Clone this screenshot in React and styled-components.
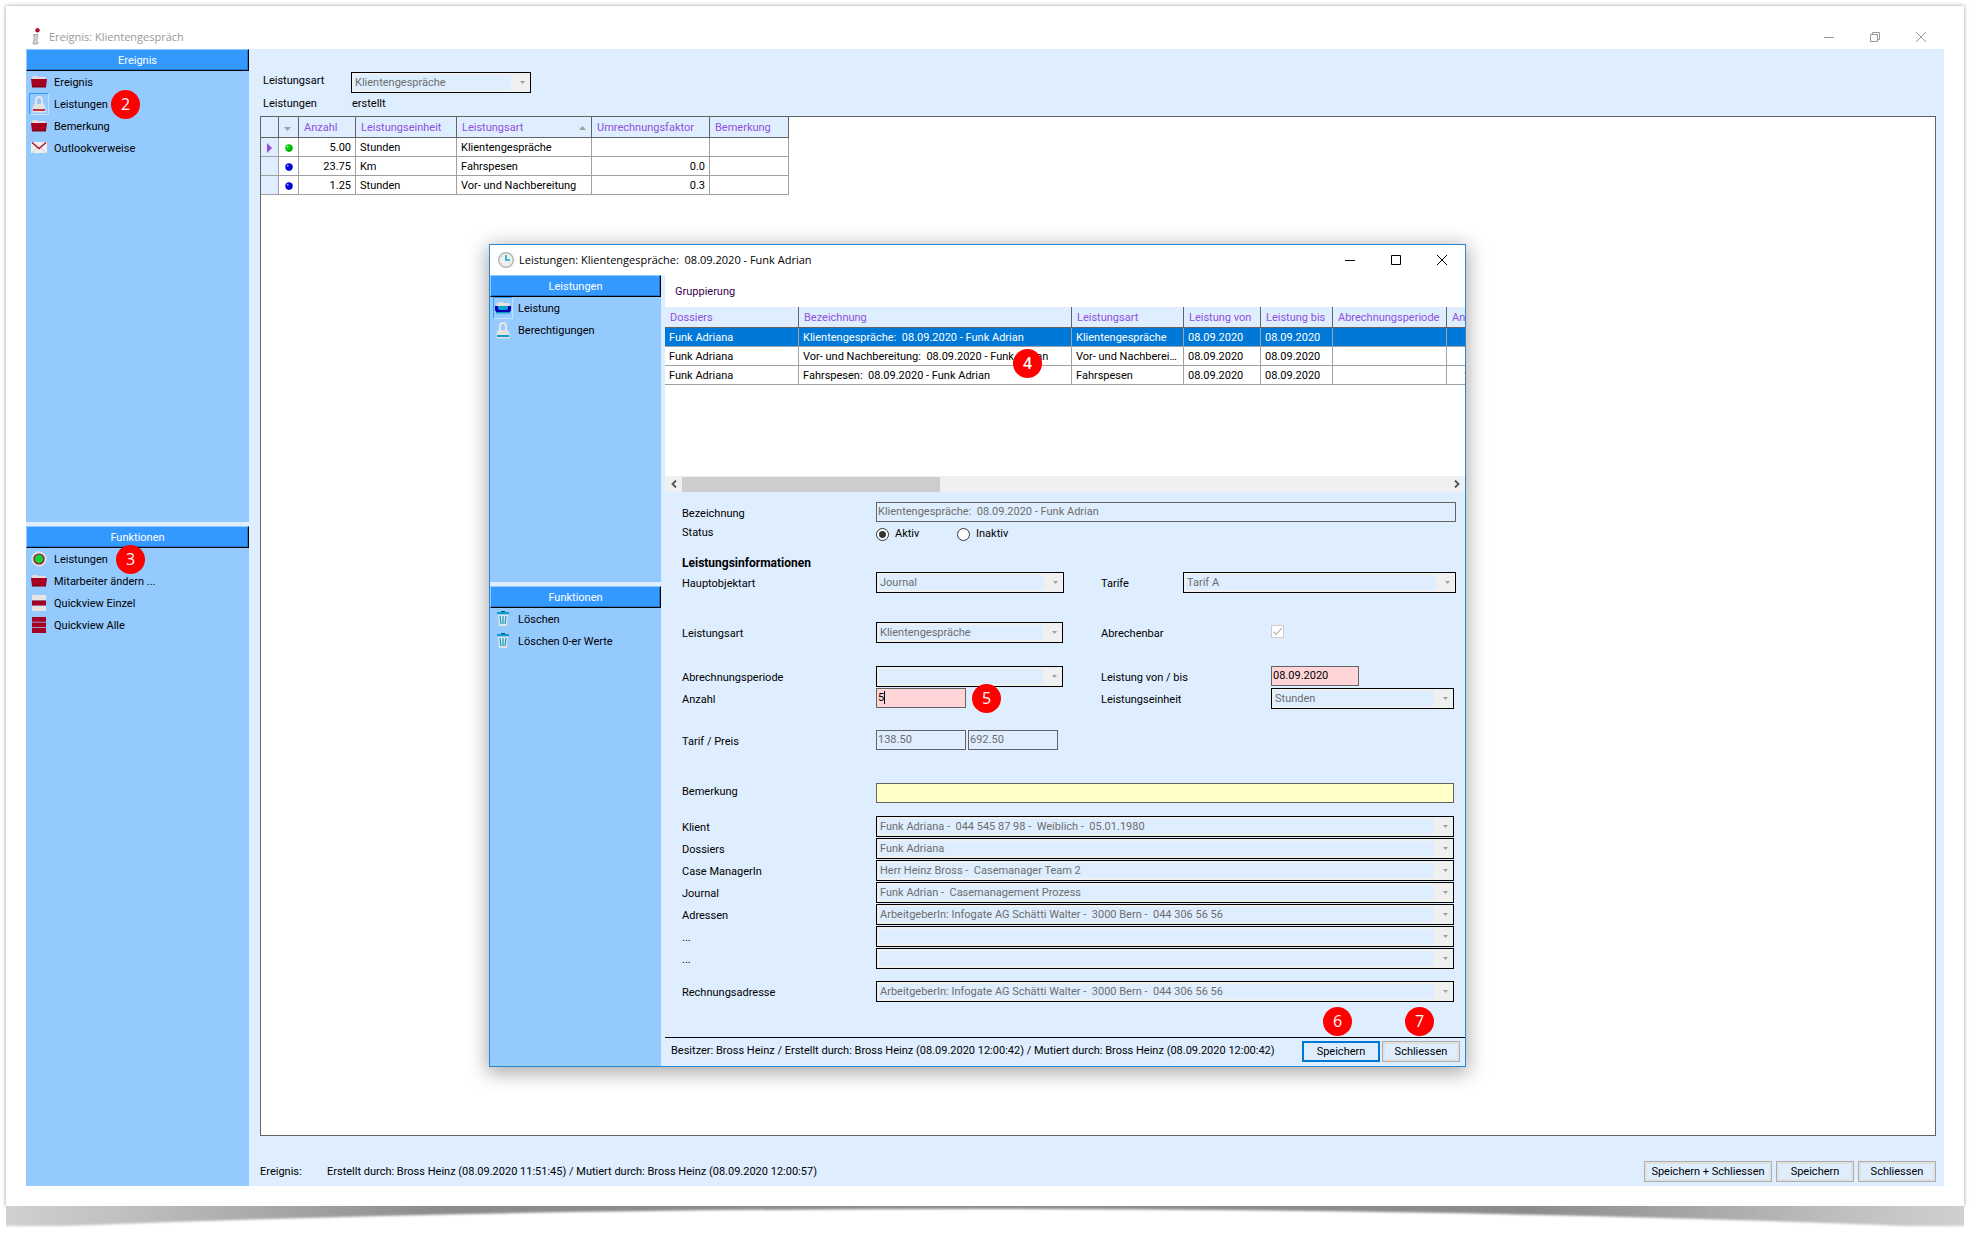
import React from "react";
import styled, { createGlobalStyle, css } from "styled-components";

const c = {
  pane: "#deeeff",
  side: "#95caff",
  head: "#3399ff",
  accent: "#9050dc",
  grid: "#a0a0a0",
  gridDark: "#646464",
  muted: "#6d6d6d",
  select: "#0078d7",
  badge: "#ff0000",
};

const Global = createGlobalStyle`
  *, *::before, *::after { box-sizing: border-box; }
  body {
    margin: 0;
    background: #fff;
    color: #000;
    font-family: Roboto, "Liberation Sans", Arial, sans-serif;
    font-size: 11px;
    line-height: 16px;
  }
  button, input, select { font: inherit; color: inherit; margin: 0; }
`;

/* ---------- page and windows ---------- */

const Page = styled.div`
  display: flex;
  flex-direction: column;
  height: 100vh;
  padding: 6px 14px 0 6px;
  overflow: hidden;
`;

const Sheet = styled.div`
  position: relative;
  flex: 1;
  min-height: 0;
  display: flex;
  flex-direction: column;
  padding: 0 20px 20px;
  background: #fff;
  box-shadow: 0 0 4px rgba(0, 0, 0, 0.4);
`;

const Curl = styled.svg`
  position: relative;
  display: block;
  flex: none;
  width: 100%;
  height: 29px;
  background: #fff;
`;

const TitleBar = styled.header`
  display: flex;
  align-items: center;
  flex: none;
  gap: ${(p) => (p.$dialog ? 5 : 8)}px;
  height: ${(p) => (p.$dialog ? 30 : 43)}px;
  padding: ${(p) => (p.$dialog ? "0 17px 0 8px" : "18px 17px 0 6px")};
  color: ${(p) => (p.$dialog ? "#000" : "#999")};
  background: #fff;
`;

const Title = styled.h1`
  flex: 1;
  margin: 0;
  font: 400 11px/16px "Open Sans", "Noto Sans", sans-serif;
  white-space: pre;
`;

const TitleControls = styled.div`
  display: flex;
  gap: 34px;
`;

const TitleButton = styled.button`
  display: flex;
  width: 12px;
  height: 12px;
  padding: 0;
  border: 0;
  background: none;
`;

const Columns = styled.div`
  flex: 1;
  min-height: 0;
  display: flex;
  background: ${c.pane};
`;

const Sidebar = styled.aside`
  flex: none;
  width: ${(p) => p.$width}px;
  display: flex;
  flex-direction: column;
  gap: 4px;
`;

const SidePanel = styled.section`
  background: ${c.side};
  ${(p) => (p.$height ? css`flex: none; height: ${p.$height}px;` : css`flex: 1;`)}
`;

const SideHeading = styled.h2`
  height: 22px;
  margin: 0;
  border: 1px solid #000;
  border-color: #95caff #000 #000 #95caff;
  box-shadow: inset -1px -1px 0 #2277cc;
  background: ${c.head};
  color: #fff;
  font-size: 11px;
  font-weight: 400;
  line-height: 22px;
  text-align: center;
`;

const NavItem = styled.button`
  position: relative;
  display: flex;
  align-items: center;
  width: 100%;
  height: 22px;
  padding: 0 0 0 3px;
  gap: 5px;
  border: 0;
  background: none;
  text-align: left;
  white-space: nowrap;
`;

const NavText = styled.span`
  padding-top: 2px;
`;

const IconFrame = styled.span`
  display: flex;
  align-items: center;
  justify-content: center;
  width: 20px;
  height: 22px;
  border: 1px solid transparent;
  ${(p) => p.$active && css`border-color: ${c.head} #c6e2ff #c6e2ff ${c.head};`}
`;

const Badge = styled.span`
  position: absolute;
  left: ${(p) => p.$x}px;
  top: ${(p) => p.$y}px;
  width: 29px;
  height: 29px;
  border-radius: 50%;
  background: ${c.badge};
  color: #fff;
  font: ${(p) => (p.$bold ? 600 : 400)} 16px/29px "Open Sans", sans-serif;
  text-align: center;
  z-index: 2;
`;

/* ---------- main content ---------- */

const Main = styled.main`
  flex: 1;
  min-width: 0;
  display: flex;
  flex-direction: column;
  padding: 20px 8px 4px 11px;
`;

const HeadFields = styled.div`
  display: grid;
  grid-template-columns: 88px 180px;
  padding: 3px 0 0 3px;
`;

const Cell = styled.span`
  height: 23px;
  line-height: 22px;
  padding-left: ${(p) => (p.$indent ? 1 : 0)}px;
`;

const GridBox = styled.div`
  flex: 1;
  min-height: 0;
  border: 1px solid ${c.gridDark};
  background: #fff;
  overflow: hidden;
`;

const Table = styled.table`
  width: ${(p) => p.$width}px;
  table-layout: fixed;
  border-collapse: separate;
  border-spacing: 0;
`;

const Th = styled.th`
  height: 21px;
  padding: 2px 5px 0;
  border-right: 1px solid ${c.gridDark};
  border-bottom: 1px solid ${c.gridDark};
  background: ${c.pane};
  color: ${c.accent};
  font-weight: 400;
  text-align: left;
  white-space: nowrap;
  overflow: hidden;
`;

const Td = styled.td`
  height: 19px;
  padding: 2px 4px 0;
  border-right: 1px solid ${c.grid};
  border-bottom: 1px solid ${c.grid};
  background: ${(p) => (p.$selected ? c.select : p.$gutter ? c.pane : "#fff")};
  color: ${(p) => (p.$selected ? "#fff" : "#000")};
  text-align: ${(p) => (p.$right ? "right" : "left")};
  line-height: 16px;
  white-space: pre;
  overflow: hidden;
  text-overflow: ellipsis;
  & > svg { display: block; margin: 0 auto; }
`;

const HeaderLine = styled.span`
  display: flex;
  align-items: center;
  justify-content: space-between;
`;

const Footer = styled.footer`
  flex: none;
  display: flex;
  align-items: center;
  gap: 4px;
`;

const MainFooter = styled(Footer)`
  padding-top: 25px;
`;

const DialogFooter = styled(Footer)`
  gap: 2px;
  height: 29px;
  padding: 0 5px 2px 6px;
  border-top: 1px solid #000;
`;

const FooterLabel = styled.span`
  width: 63px;
`;

const FooterText = styled.span`
  flex: 1;
  white-space: nowrap;
`;

const Button = styled.button`
  height: 21px;
  min-width: 78px;
  padding: 0 6px;
  border: 1px solid ${(p) => (p.$primary ? c.select : "#adadad")};
  box-shadow: inset 0 0 0 ${(p) => (p.$primary ? `1px ${c.select}` : "2px #e1e1e1")};
  background: ${c.pane};
  line-height: 17px;
`;

const WideButton = styled(Button)`
  min-width: 128px;
`;

/* ---------- dialog ---------- */

const Dialog = styled.div`
  position: absolute;
  left: 483px;
  top: 238px;
  width: 977px;
  display: flex;
  flex-direction: column;
  border: 1px solid #2a86d2;
  background: ${c.pane};
  box-shadow: 0 4px 18px 2px rgba(0, 0, 0, 0.34);
`;

const DialogBody = styled.div`
  flex: 1;
  min-width: 0;
  display: flex;
  flex-direction: column;
  padding-left: 4px;
`;

const ListArea = styled.div`
  height: 201px;
  background: #fff;
  overflow: hidden;
`;

const GroupLabel = styled.div`
  height: 32px;
  padding-left: 10px;
  color: #3a0050;
  line-height: 34px;
`;

const ScrollBar = styled.div`
  display: flex;
  align-items: center;
  justify-content: space-between;
  height: 16px;
  background: #f0f0f0;
`;

const ScrollThumb = styled.div`
  width: 258px;
  height: 15px;
  margin-right: auto;
  background: #cdcdcd;
`;

const ScrollArrow = styled.button`
  display: flex;
  align-items: center;
  justify-content: center;
  width: 17px;
  height: 16px;
  padding: 0;
  border: 0;
  background: none;
`;

const Form = styled.form`
  padding: 10px 9px 34px 17px;
`;

const Row = styled.div`
  display: grid;
  grid-template-columns: ${(p) => p.$cols || "194px 1fr"};
  height: ${(p) => p.$height || 22}px;
  margin-top: ${(p) => p.$gap || 0}px;
  padding-right: ${(p) => (p.$wide ? 0 : 2)}px;
`;

const Label = styled.label`
  line-height: ${(p) => p.$line || 24}px;
`;

const FormHeading = styled.h3`
  margin: 10px 0 0;
  font-size: 12px;
  font-weight: 700;
  line-height: 18px;
`;

const Field = styled.input`
  width: ${(p) => (p.$width ? `${p.$width}px` : "100%")};
  height: 20px;
  padding: 0 1px 2px;
  border: 1px solid ${c.gridDark};
  border-radius: 0;
  outline: 0;
  background: ${(p) => p.$tone || c.pane};
  color: ${(p) => (p.disabled ? c.muted : "#000")};
`;

const Pair = styled.div`
  position: relative;
  display: flex;
  gap: 2px;
`;

const Caret = styled.span`
  position: absolute;
  left: 8px;
  top: 3px;
  width: 1px;
  height: 13px;
  background: #000;
`;

const SelectBox = styled.span`
  display: flex;
  align-items: center;
  width: ${(p) => (p.$width ? `${p.$width}px` : "100%")};
  height: 21px;
  padding: 2px 0 2px 2px;
  border: 1px solid #000;
  background: #f0f0f0;
`;

const SelectInput = styled.select`
  flex: 1;
  min-width: 0;
  height: 15px;
  padding: 1px 1px 0;
  border: 0;
  border-radius: 0;
  appearance: none;
  background: ${c.pane};
  color: ${c.muted};
  opacity: 1;
  line-height: 14px;
  white-space: pre;
`;

const SelectArrow = styled.svg`
  flex: none;
  width: 5px;
  height: 3px;
  margin: 0 5px 0 9px;
`;

const RadioRow = styled.div`
  display: flex;
  align-items: center;
  gap: 6px;
`;

const RadioLabel = styled.label`
  width: 56px;
`;

const Radio = styled.input`
  appearance: none;
  width: 13px;
  height: 13px;
  border: 1px solid #333;
  border-radius: 50%;
  background: #fff;
  &:checked { background: radial-gradient(circle, #333 0 3px, #fff 4px); }
`;

const CheckWrap = styled.span`
  display: grid;
  width: 13px;
  height: 13px;
  margin-top: 3px;
  & > * { grid-area: 1 / 1; }
`;

const CheckBox = styled.input`
  appearance: none;
  width: 13px;
  height: 13px;
  border: 1px solid #ccc;
  background: #fff;
`;

/* ---------- icons ---------- */

const Folder = () => (
  <svg width="16" height="14" viewBox="0 0 16 14">
    <path d="M1 4V2l1-1h4l1 1h7l1 1v1z" fill="#e4dcdc" />
    <path d="M0 4h16l-1 8H1z" fill="#a50021" />
    <path d="M1 11h14v1.500H1z" fill="#850018" />
  </svg>
);

const BlueFolder = () => (
  <svg width="16" height="14" viewBox="0 0 16 14">
    <path d="M1 6l1-4 2-1h4l1 1h5l1 2v3z" fill="#e0e0e0" />
    <path d="M0 5h16v4l-1 2H1L0 9z" fill="#0000b4" />
    <path d="M3 5h10v3l-2 1H5L3 8z" fill="#0c9fd0" />
    <path d="M1 11h14v1.500H1z" fill="#0c9fd0" />
  </svg>
);

const Lock = ({ tone }) => (
  <svg width="14" height="17" viewBox="0 0 14 17">
    <path d="M4 9V4a3 3 0 0 1 6 0v5" fill="none" stroke="#e6e6e6" strokeWidth="2" />
    <path d="M2 8h10l1.500 4v4.500H.5V12z" fill="#e2e2e2" />
    <path d="M1 13h12v2H1z" fill={tone} />
  </svg>
);

const Mail = () => (
  <svg width="16" height="12" viewBox="0 0 16 12">
    <path d="M0 0h16v11H0z" fill="#f1eeee" />
    <path d="M1 11l5-5M15 11l-5-5" stroke="#d4cccc" />
    <path d="M1 .500 8 6.500 15 .500" fill="none" stroke="#b3122e" strokeWidth="1.500" />
  </svg>
);

const Target = () => (
  <svg width="16" height="16" viewBox="0 0 16 16">
    <circle cx="8" cy="8" r="7.200" fill="#ddd" stroke="#eee" strokeDasharray="2 1" />
    <circle cx="8" cy="8" r="5.600" fill="#a50021" />
    <circle cx="8" cy="8" r="4.400" fill="#0fd13a" />
  </svg>
);

const QuickOne = () => (
  <svg width="14" height="16" viewBox="0 0 14 16">
    <path d="M0 0h14v5H0zM0 11h14v5H0z" fill="#e8e4e4" />
    <path d="M0 5.500h14v5H0z" fill="#a50021" />
  </svg>
);

const QuickAll = () => (
  <svg width="14" height="16" viewBox="0 0 14 16">
    <path d="M0 0h14v4.800H0zM0 5.500h14v4.800H0zM0 11h14v5H0z" fill="#a50021" />
  </svg>
);

const Trash = () => (
  <svg width="14" height="16" viewBox="0 0 14 16">
    <path d="M5 0h4v2H5z" fill="#0a3f8c" />
    <path d="M1 1h12v2H1z" fill="#0c9fc4" />
    <path d="M2 4h10l-1 11H3z" fill="#e2e2e2" />
    <path d="M4 5l1 8M7 5v8M10 5l-1 8" stroke="#0c9fc4" strokeWidth="1.200" />
  </svg>
);

const Clock = () => (
  <svg width="16" height="16" viewBox="0 0 16 16">
    <circle cx="8" cy="8" r="7.300" fill="#eef0f0" stroke="#b4b4b4" strokeWidth="1.400" />
    <path d="M8 3v5h4" fill="none" stroke="#0fb0c0" strokeWidth="1.600" />
    <path d="M3 12l1-1M12 12l-1-1M3 4l1 1" stroke="#c4c4c4" />
  </svg>
);

const InfoMark = () => (
  <svg width="9" height="17" viewBox="0 0 9 17">
    <circle cx="5.500" cy="2.200" r="2.200" fill="#b3122e" />
    <path d="M1.500 6.500H6L4.500 14l1.700.3-.6 1.700H1l1.500-8-1.300-.2z" fill="#d6d6d6" stroke="#9a9a9a" strokeWidth=".8" />
  </svg>
);

const Dot = ({ tone, shade }) => (
  <svg width="8" height="8" viewBox="0 0 8 8">
    <circle cx="4" cy="4" r="3.700" fill={tone} />
    <path d="M7 2.500A3.700 3.700 0 0 1 2.500 7.300 5 5 0 0 0 7 2.500z" fill={shade} />
    <circle cx="2.700" cy="2.700" r=".9" fill="#fff" opacity=".7" />
  </svg>
);

const Tri = ({ up }) => (
  <svg width="7" height="4" viewBox="0 0 7 4">
    <path d={up ? "M0 4h7L3.500 0z" : "M0 0h7L3.500 4z"} fill="#a0a0a0" />
  </svg>
);

const Pointer = () => (
  <svg width="5" height="10" viewBox="0 0 5 10">
    <path d="M0 0l5 5-5 5z" fill={c.accent} />
  </svg>
);

const Glyph = ({ d }) => (
  <svg width="12" height="12" viewBox="0 0 12 12">
    <path d={d} fill="none" stroke="currentColor" />
  </svg>
);

const GLYPHS = {
  Minimieren: "M1 6.500h10",
  Wiederherstellen: "M1.500 3.500h7v7h-7zM3.500 3.500v-2h7v7h-2",
  Maximieren: "M1.500 1.500h9v9h-9z",
  "Fenster schliessen": "M1 1l10 10M11 1L1 11",
};

/* ---------- composed parts ---------- */

const Controls = ({ names }) => (
  <TitleControls>
    {names.map((n) => (
      <TitleButton key={n} type="button" aria-label={n}>
        <Glyph d={GLYPHS[n]} />
      </TitleButton>
    ))}
  </TitleControls>
);

const Nav = ({ icon, label, active, children }) => (
  <NavItem type="button">
    <IconFrame $active={active}>{icon}</IconFrame>
    <NavText>{label}</NavText>
    {children}
  </NavItem>
);

const Select = ({ id, value = "", width }) => (
  <SelectBox $width={width}>
    <SelectInput id={id} disabled>
      <option>{value.replace(/ {2}/g, "\u00a0 ")}</option>
    </SelectInput>
    <SelectArrow viewBox="0 0 5 3">
      <path d="M0 0h5L2.500 3z" fill="#a0a0a0" />
    </SelectArrow>
  </SelectBox>
);

const SelectRow = ({ id, label, value, gap }) => (
  <Row $gap={gap}>
    <Label htmlFor={id}>{label}</Label>
    <Select id={id} value={value} />
  </Row>
);

const SERVICES = [
  { tone: "#00c800", shade: "#007a00", n: "5.00", unit: "Stunden", kind: "Klientengespräche", f: "" },
  { tone: "#0000e0", shade: "#000080", n: "23.75", unit: "Km", kind: "Fahrspesen", f: "0.0" },
  { tone: "#0000e0", shade: "#000080", n: "1.25", unit: "Stunden", kind: "Vor- und Nachbereitung", f: "0.3" },
];

const ENTRIES = [
  ["Funk Adriana", "Klientengespräche:  08.09.2020 - Funk Adrian", "Klientengespräche", ""],
  ["Funk Adriana", "Vor- und Nachbereitung:  08.09.2020 - Funk Adrian", "Vor- und Nachbereitung", ""],
  ["Funk Adriana", "Fahrspesen:  08.09.2020 - Funk Adrian", "Fahrspesen", "23.75"],
];

const LINKS = [
  ["klient", "Klient", "Funk Adriana -  044 545 87 98 -  Weiblich -  05.01.1980", 11],
  ["dossiers", "Dossiers", "Funk Adriana"],
  ["manager", "Case ManagerIn", "Herr Heinz Bross -  Casemanager Team 2"],
  ["journal", "Journal", "Funk Adrian -  Casemanagement Prozess"],
  ["adressen", "Adressen", "ArbeitgeberIn: Infogate AG Schätti Walter -  3000 Bern -  044 306 56 56"],
  ["adresse2", "...", ""],
  ["adresse3", "...", ""],
  ["rechnung", "Rechnungsadresse", "ArbeitgeberIn: Infogate AG Schätti Walter -  3000 Bern -  044 306 56 56", 11],
];

const ServiceTable = () => (
  <Table $width={528}>
    <colgroup>
      {[18, 20, 57, 101, 135, 118, 79].map((w, i) => <col key={i} width={w} />)}
    </colgroup>
    <thead>
      <tr>
        <Th />
        <Th><Tri /></Th>
        <Th>Anzahl</Th>
        <Th>Leistungseinheit</Th>
        <Th><HeaderLine>Leistungsart<Tri up /></HeaderLine></Th>
        <Th>Umrechnungsfaktor</Th>
        <Th>Bemerkung</Th>
      </tr>
    </thead>
    <tbody>
      {SERVICES.map((s, i) => (
        <tr key={s.n}>
          <Td $gutter>{i === 0 && <Pointer />}</Td>
          <Td><Dot tone={s.tone} shade={s.shade} /></Td>
          <Td $right>{s.n}</Td>
          <Td>{s.unit}</Td>
          <Td>{s.kind}</Td>
          <Td $right>{s.f}</Td>
          <Td />
        </tr>
      ))}
    </tbody>
  </Table>
);

const EntryTable = () => (
  <Table $width={832}>
    <colgroup>
      {[134, 273, 112, 77, 72, 114, 50].map((w, i) => <col key={i} width={w} />)}
    </colgroup>
    <thead>
      <tr>
        {["Dossiers", "Bezeichnung", "Leistungsart", "Leistung von", "Leistung bis", "Abrechnungsperiode", "Anzahl"].map((h) => (
          <Th key={h}>{h}</Th>
        ))}
      </tr>
    </thead>
    <tbody>
      {ENTRIES.map(([who, name, kind, n], i) => (
        <tr key={name}>
          <Td $selected={i === 0}>{who}</Td>
          <Td $selected={i === 0}>{name}</Td>
          <Td $selected={i === 0}>{kind}</Td>
          <Td $selected={i === 0}>08.09.2020</Td>
          <Td $selected={i === 0}>08.09.2020</Td>
          <Td $selected={i === 0} />
          <Td $selected={i === 0} $right>{n}</Td>
        </tr>
      ))}
    </tbody>
  </Table>
);

const TWO = "194px 225px 82px 1fr";
const TWO_WIDE = "194px 225px 170px 1fr";

const ServiceForm = () => (
  <Form onSubmit={(e) => e.preventDefault()}>
    <Row $wide>
      <Label htmlFor="bez">Bezeichnung</Label>
      <Field id="bez" disabled defaultValue="Klientengespräche:  08.09.2020 - Funk Adrian" />
    </Row>
    <Row $height={20}>
      <Label as="span" $line={18}>Status</Label>
      <RadioRow>
        <Radio type="radio" name="status" id="aktiv" defaultChecked />
        <RadioLabel htmlFor="aktiv">Aktiv</RadioLabel>
        <Radio type="radio" name="status" id="inaktiv" />
        <RadioLabel htmlFor="inaktiv">Inaktiv</RadioLabel>
      </RadioRow>
    </Row>
    <FormHeading>Leistungsinformationen</FormHeading>
    <Row $cols={TWO} $wide>
      <Label htmlFor="haupt">Hauptobjektart</Label>
      <Select id="haupt" value="Journal" width={188} />
      <Label htmlFor="tarife">Tarife</Label>
      <Select id="tarife" value="Tarif A" />
    </Row>
    <Row $cols={TWO_WIDE} $gap={28}>
      <Label htmlFor="art">Leistungsart</Label>
      <Select id="art" value="Klientengespräche" width={187} />
      <Label htmlFor="abr">Abrechenbar</Label>
      <CheckWrap>
        <CheckBox type="checkbox" id="abr" defaultChecked disabled />
        <svg width="13" height="13" viewBox="0 0 13 13" pointerEvents="none">
          <path d="M2.500 6.500L5 9.500l6-6.500" fill="none" stroke="#bcbcbc" strokeWidth="1.200" />
        </svg>
      </CheckWrap>
    </Row>
    <Row $cols={TWO_WIDE} $gap={22}>
      <Label htmlFor="periode">Abrechnungsperiode</Label>
      <Select id="periode" width={187} />
      <Label htmlFor="von">Leistung von / bis</Label>
      <Field id="von" $width={88} $tone="#ffd5d8" defaultValue="08.09.2020" />
    </Row>
    <Row $cols={TWO_WIDE}>
      <Label htmlFor="anzahl">Anzahl</Label>
      <Pair>
        <Field id="anzahl" $width={90} $tone="#ffd5d8" defaultValue="5" />
        <Caret />
        <Badge $x={96} $y={-4}>5</Badge>
      </Pair>
      <Label htmlFor="einheit">Leistungseinheit</Label>
      <Select id="einheit" value="Stunden" />
    </Row>
    <Row $gap={20}>
      <Label htmlFor="tarif">Tarif / Preis</Label>
      <Pair>
        <Field id="tarif" $width={90} disabled defaultValue="138.50" />
        <Field aria-label="Preis" $width={90} disabled defaultValue="692.50" />
      </Pair>
    </Row>
    <Row $gap={31}>
      <Label htmlFor="bem" $line={18}>Bemerkung</Label>
      <Field id="bem" $tone="#ffffc8" defaultValue="" />
    </Row>
    {LINKS.map(([id, label, value, gap]) => (
      <SelectRow key={id} id={id} label={label} value={value} gap={gap} />
    ))}
  </Form>
);

const ServiceDialog = () => (
  <Dialog role="dialog" aria-label="Leistungen">
    <TitleBar $dialog>
      <Clock />
      <Title as="h2">{"Leistungen: Klientengespräche:  08.09.2020 - Funk Adrian"}</Title>
      <Controls names={["Minimieren", "Maximieren", "Fenster schliessen"]} />
    </TitleBar>
    <Columns>
      <Sidebar $width={171}>
        <SidePanel $height={307}>
          <SideHeading>Leistungen</SideHeading>
          <Nav icon={<BlueFolder />} label="Leistung" active />
          <Nav icon={<Lock tone="#0c9fc4" />} label="Berechtigungen" />
        </SidePanel>
        <SidePanel>
          <SideHeading>Funktionen</SideHeading>
          <Nav icon={<Trash />} label="Löschen" />
          <Nav icon={<Trash />} label="Löschen 0-er Werte" />
        </SidePanel>
      </Sidebar>
      <DialogBody>
        <ListArea>
          <GroupLabel>Gruppierung</GroupLabel>
          <EntryTable />
        </ListArea>
        <ScrollBar>
          <ScrollArrow type="button" aria-label="Nach links">
            <svg width="6" height="8" viewBox="0 0 6 8"><path d="M5 .500L1.500 4 5 7.500" fill="none" stroke="#505050" strokeWidth="1.800" /></svg>
          </ScrollArrow>
          <ScrollThumb />
          <ScrollArrow type="button" aria-label="Nach rechts">
            <svg width="6" height="8" viewBox="0 0 6 8"><path d="M1 .500L4.500 4 1 7.500" fill="none" stroke="#505050" strokeWidth="1.800" /></svg>
          </ScrollArrow>
        </ScrollBar>
        <ServiceForm />
        <DialogFooter>
          <FooterText>
            Besitzer: Bross Heinz / Erstellt durch: Bross Heinz (08.09.2020 12:00:42) / Mutiert durch: Bross Heinz (08.09.2020 12:00:42)
          </FooterText>
          <Button type="button" $primary>Speichern</Button>
          <Button type="button">Schliessen</Button>
        </DialogFooter>
      </DialogBody>
    </Columns>
    <Badge $x={523} $y={104} $bold>4</Badge>
    <Badge $x={833} $y={762}>6</Badge>
    <Badge $x={915} $y={762}>7</Badge>
  </Dialog>
);

export default function App() {
  return (
    <>
      <Global />
      <Page>
        <Sheet>
          <TitleBar>
            <InfoMark />
            <Title>Ereignis: Klientengespräch</Title>
            <Controls names={["Minimieren", "Wiederherstellen", "Fenster schliessen"]} />
          </TitleBar>
          <Columns>
            <Sidebar $width={223}>
              <SidePanel $height={473}>
                <SideHeading>Ereignis</SideHeading>
                <Nav icon={<Folder />} label="Ereignis" />
                <Nav icon={<Lock tone="#c8323c" />} label="Leistungen" active>
                  <Badge $x={85} $y={-3}>2</Badge>
                </Nav>
                <Nav icon={<Folder />} label="Bemerkung" />
                <Nav icon={<Mail />} label="Outlookverweise" />
              </SidePanel>
              <SidePanel>
                <SideHeading>Funktionen</SideHeading>
                <Nav icon={<Target />} label="Leistungen">
                  <Badge $x={90} $y={-3}>3</Badge>
                </Nav>
                <Nav icon={<Folder />} label="Mitarbeiter ändern ..." />
                <Nav icon={<QuickOne />} label="Quickview Einzel" />
                <Nav icon={<QuickAll />} label="Quickview Alle" />
              </SidePanel>
            </Sidebar>
            <Main>
              <HeadFields>
                <Label htmlFor="kopfart" $line={18}>Leistungsart</Label>
                <Select id="kopfart" value="Klientengespräche" />
                <Cell>Leistungen</Cell>
                <Cell $indent>erstellt</Cell>
              </HeadFields>
              <GridBox><ServiceTable /></GridBox>
              <MainFooter>
                <FooterLabel>Ereignis:</FooterLabel>
                <FooterText>
                  Erstellt durch: Bross Heinz (08.09.2020 11:51:45) / Mutiert durch: Bross Heinz (08.09.2020 12:00:57)
                </FooterText>
                <WideButton type="button">Speichern + Schliessen</WideButton>
                <Button type="button">Speichern</Button>
                <Button type="button">Schliessen</Button>
              </MainFooter>
            </Main>
          </Columns>
          <ServiceDialog />
        </Sheet>
        <Curl viewBox="0 0 1000 29" preserveAspectRatio="none">
          <defs>
            <linearGradient id="curl">
              <stop offset="0" stopColor="#d0d0d0" />
              <stop offset=".06" stopColor="#c0c0c0" />
              <stop offset=".22" stopColor="#8c8c8c" />
              <stop offset=".78" stopColor="#8c8c8c" />
              <stop offset=".94" stopColor="#c0c0c0" />
              <stop offset="1" stopColor="#d0d0d0" />
            </linearGradient>
            <filter id="soft" x="-1%" y="-30%" width="102%" height="160%">
              <feGaussianBlur stdDeviation=".4 1.200" />
            </filter>
          </defs>
          <path d="M0-4V20H30Q250 3 500 3T970 20H1000V-4z" fill="url(#curl)" filter="url(#soft)" />
        </Curl>
      </Page>
    </>
  );
}
